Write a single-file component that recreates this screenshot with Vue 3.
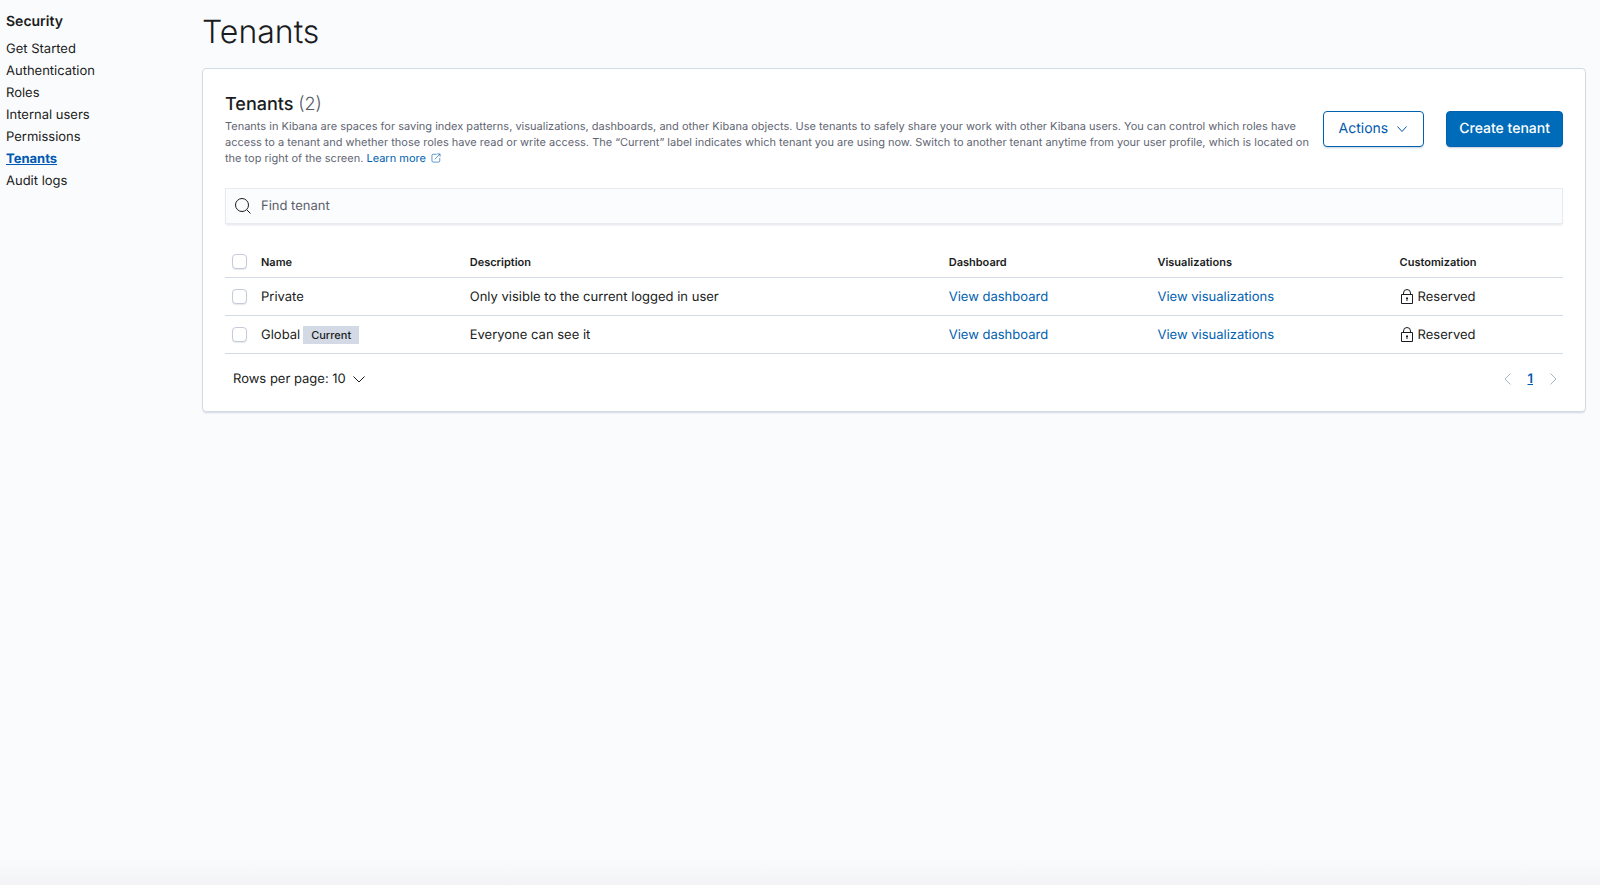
<script setup>
import { ref } from 'vue'

const navItems = ['Get Started', 'Authentication', 'Roles', 'Internal users', 'Permissions', 'Tenants', 'Audit logs']
const activeItem = 'Tenants'

const tenants = [
  { name: 'Private', current: false, description: 'Only visible to the current logged in user' },
  { name: 'Global', current: true, description: 'Everyone can see it' },
]

const query = ref('')
const selected = ref([])

function toggleAll(event) {
  selected.value = event.target.checked ? tenants.map((t) => t.name) : []
}
</script>

<template>
  <div class="page">
    <nav class="sidebar" aria-label="Security">
      <h2 class="sidebar-title">Security</h2>
      <ul class="nav-list">
        <li v-for="item in navItems" :key="item">
          <a href="#" class="nav-link" :class="{ active: item === activeItem }">{{ item }}</a>
        </li>
      </ul>
    </nav>

    <main class="main">
      <h1 class="page-title">Tenants</h1>

      <section class="panel">
        <header class="panel-header">
          <div class="intro">
            <h3 class="panel-title">Tenants <span class="count">(2)</span></h3>
            <p class="intro-text">
              Tenants in Kibana are spaces for saving index patterns, visualizations, dashboards, and other Kibana
              objects. Use tenants to safely share your work with other Kibana users. You can control which roles have
              access to a tenant and whether those roles have read or write access. The “Current” label indicates which
              tenant you are using now. Switch to another tenant anytime from your user profile, which is located on
              the top right of the screen.
              <a href="#" class="link">Learn more<svg class="popout" viewBox="0 0 16 16" width="10" height="10" aria-hidden="true"><path d="M9 2H3.5A2 2 0 0 0 1.500 4v8.500a2 2 0 0 0 2 2H12a2 2 0 0 0 2-2V8M10 1.500h4.500V6M14.500 1.500 6 10" /></svg></a>
            </p>
          </div>
          <div class="actions">
            <button type="button" class="btn btn-outline">
              Actions
              <svg viewBox="0 0 12 12" width="12" height="12" aria-hidden="true"><path d="M1.500 3.500 6 8.500l4.500-5" /></svg>
            </button>
            <button type="button" class="btn btn-fill">Create tenant</button>
          </div>
        </header>

        <div class="search">
          <svg viewBox="0 0 16 16" width="16" height="16" aria-hidden="true">
            <circle cx="7" cy="7" r="6.500" />
            <path d="m12 12 3.500 3.500" />
          </svg>
          <input v-model="query" type="search" placeholder="Find tenant" aria-label="Find tenant" />
        </div>

        <table class="table">
          <colgroup>
            <col class="col-check" />
            <col class="col-name" />
            <col class="col-description" />
            <col class="col-dashboard" />
            <col class="col-visualizations" />
            <col />
          </colgroup>
          <thead>
            <tr>
              <th scope="col">
                <input
                  type="checkbox"
                  class="check"
                  aria-label="Select all rows"
                  :checked="selected.length === tenants.length"
                  @change="toggleAll"
                />
              </th>
              <th scope="col">Name</th>
              <th scope="col">Description</th>
              <th scope="col">Dashboard</th>
              <th scope="col">Visualizations</th>
              <th scope="col">Customization</th>
            </tr>
          </thead>
          <tbody>
            <tr v-for="tenant in tenants" :key="tenant.name">
              <td>
                <input
                  v-model="selected"
                  type="checkbox"
                  class="check"
                  :value="tenant.name"
                  :aria-label="`Select ${tenant.name}`"
                />
              </td>
              <td>
                <div class="cell">
                  {{ tenant.name }}
                  <span v-if="tenant.current" class="badge">Current</span>
                </div>
              </td>
              <td>{{ tenant.description }}</td>
              <td><a href="#" class="link">View dashboard</a></td>
              <td><a href="#" class="link">View visualizations</a></td>
              <td>
                <div class="cell">
                  <svg class="lock" viewBox="0 0 14 16" width="14" height="16" aria-hidden="true">
                    <path d="M1.500 5.500h11v9h-11zM3.500 5.500V4a3.500 3.500 0 0 1 7 0v1.500" />
                    <path class="keyhole" d="M6 8.500h2v1.500h-.500v2h-1v-2H6z" />
                  </svg>
                  Reserved
                </div>
              </td>
            </tr>
          </tbody>
        </table>

        <footer class="footer">
          <button type="button" class="rows-button">
            Rows per page: 10
            <svg viewBox="0 0 12 12" width="12" height="12" aria-hidden="true"><path d="M.500 3.500 6 9l5.500-5.500" /></svg>
          </button>
          <nav class="pager" aria-label="Pagination">
            <button type="button" class="arrow" aria-label="Previous page" disabled>
              <svg viewBox="0 0 12 12" width="12" height="12" aria-hidden="true"><path d="M8.500.500 3 6l5.500 5.500" /></svg>
            </button>
            <a href="#" class="page-number" aria-current="page">1</a>
            <button type="button" class="arrow" aria-label="Next page" disabled>
              <svg viewBox="0 0 12 12" width="12" height="12" aria-hidden="true"><path d="M3.500.500 9 6l-5.500 5.500" /></svg>
            </button>
          </nav>
        </footer>
      </section>
    </main>
  </div>
</template>

<style>
body {
  margin: 0;
  background: #fafbfd;
}
</style>

<style scoped>
.page {
  box-sizing: border-box;
  display: flex;
  min-height: 100vh;
  padding-right: 14px;
  background: linear-gradient(to top, #f3f3f5, #fafbfd 24px);
  color: #1a1c21;
  font: 13px/20px Inter, "Liberation Sans", sans-serif;
  text-rendering: geometricPrecision;
}

h1,
h2,
h3,
p,
ul {
  margin: 0;
  padding: 0;
}

svg {
  flex: none;
  fill: none;
  stroke: currentColor;
}

button,
input {
  font: inherit;
  text-rendering: inherit;
}

button {
  padding: 0;
  border: 0;
  background: none;
  color: inherit;
}

.sidebar {
  flex: none;
  box-sizing: border-box;
  width: 202px;
  padding: 11px 6px;
}

.sidebar-title {
  margin-bottom: 6px;
  font-size: 14px;
  line-height: 22px;
  font-weight: 600;
}

.nav-list {
  display: grid;
  gap: 2px;
  list-style: none;
}

.nav-list li {
  display: flex;
}

.nav-link {
  color: #1a1c21;
  text-decoration: none;
}

.nav-link.active {
  color: #0059b3;
  font-weight: 700;
  text-decoration: underline;
}

.main {
  flex: 1;
  min-width: 0;
  padding-top: 12px;
}

.page-title {
  margin-bottom: 16px;
  font-size: 32px;
  line-height: 40px;
  font-weight: 300;
}

.panel {
  padding: 22px;
  border: 1px solid #d3dae6;
  border-radius: 4px;
  background: #fff;
  box-shadow: 0 2px 2px -1px rgba(152, 162, 179, 0.4);
}

.panel-header {
  display: flex;
  align-items: center;
  justify-content: space-between;
  gap: 4px;
  margin-bottom: 22px;
}

.intro {
  flex: 1;
}

.panel-title {
  font-size: 18px;
  line-height: 27px;
  font-weight: 500;
}

.count {
  color: #535966;
  font-weight: 300;
}

.intro-text {
  color: #5f6673;
  font-size: 11px;
  line-height: 16px;
}

.link {
  color: #0061b0;
  text-decoration: none;
}

.popout {
  margin-left: 5px;
  vertical-align: -1px;
}

.actions {
  display: flex;
  gap: 22px;
}

.btn {
  display: flex;
  align-items: center;
  gap: 8px;
  box-sizing: border-box;
  height: 36px;
  padding: 0 12px;
  border: 1px solid #0061b0;
  border-radius: 4px;
  font-size: 14px;
  box-shadow: 0 2px 2px -1px rgba(54, 97, 126, 0.3);
}

.btn-outline {
  padding: 0 15px;
  background: #fff;
  color: #0059ad;
}

.btn-fill {
  background: #006bb8;
  color: #fff;
  font-weight: 500;
}

.search {
  display: flex;
  align-items: center;
  gap: 10px;
  box-sizing: border-box;
  height: 36px;
  margin-bottom: 22px;
  padding: 0 9px;
  border: 1px solid #e6eaf1;
  background: #fbfcfd;
  box-shadow: 0 2px 2px -1px rgba(152, 162, 179, 0.3);
}

.search input {
  flex: 1;
  padding: 0;
  border: 0;
  outline: 0;
  background: none;
  color: inherit;
}

.search input::placeholder {
  color: #5a606b;
  opacity: 1;
}

.table {
  width: 100%;
  table-layout: fixed;
  border-collapse: collapse;
}

.col-check {
  width: 29px;
}

.col-name,
.col-dashboard {
  width: 15.6%;
}

.col-description {
  width: 35.8%;
}

.col-visualizations {
  width: 18.1%;
}

th,
td {
  height: 37px;
  padding: 0 7px;
  border-bottom: 1px solid #d3dae6;
  text-align: left;
}

th {
  height: 31px;
  font-size: 11px;
  font-weight: 600;
}

.cell {
  display: flex;
  align-items: center;
  gap: 3px;
}

.check {
  display: block;
  appearance: none;
  box-sizing: border-box;
  width: 15px;
  height: 15px;
  margin: 0;
  border: 1px solid #c5cbd8;
  border-radius: 4px;
  background: #fff;
  box-shadow: 0 1px 1px rgba(152, 162, 179, 0.25);
}

.check:checked {
  border-color: #006bb8;
  background: #006bb8;
}

.badge {
  padding: 0 8px;
  background: #d3dae6;
  font-size: 11px;
  line-height: 18px;
  font-weight: 500;
}

.lock {
  margin-right: 1px;
}

.lock .keyhole {
  fill: currentColor;
  stroke: none;
}

.footer {
  display: flex;
  align-items: center;
  justify-content: space-between;
  padding: 15px 4px 0 8px;
}

.rows-button {
  display: flex;
  align-items: center;
  gap: 7px;
}

.pager {
  display: flex;
  align-items: center;
  gap: 14px;
}

.arrow {
  display: flex;
  color: #abb4c4;
}

.page-number {
  color: #0059b3;
  font-weight: 600;
}
</style>
